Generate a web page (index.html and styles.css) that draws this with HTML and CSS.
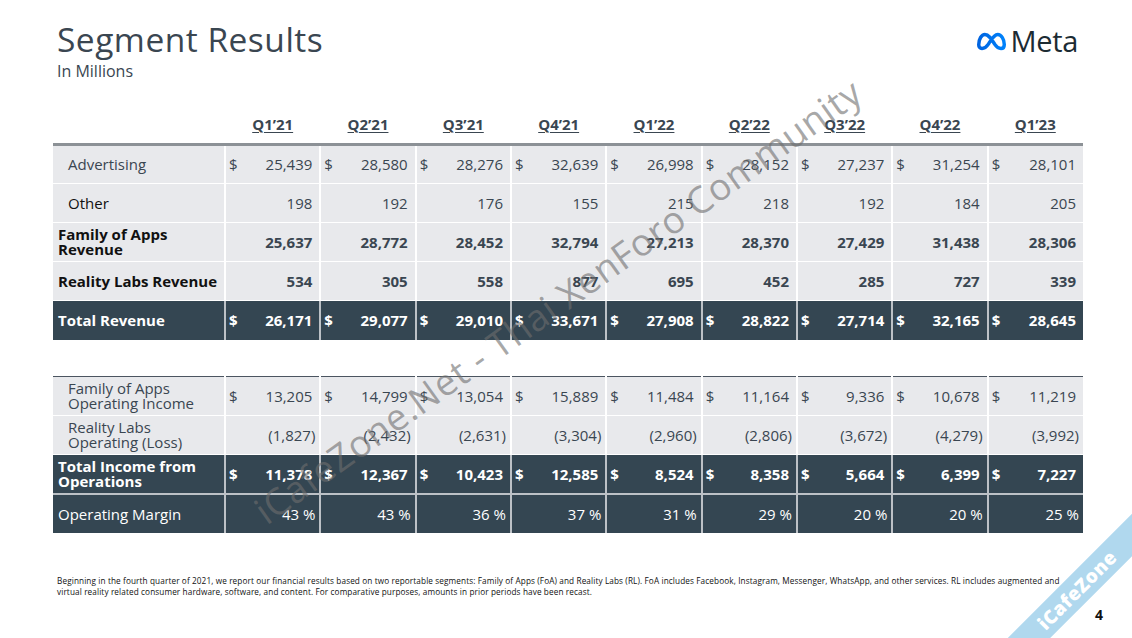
FILE: index.html
```html
<!DOCTYPE html>
<html>
<head>
<meta charset="utf-8">
<link rel="stylesheet" href="styles.css">
</head>
<body>
<div class="slide">
  <header class="top">
    <div class="titles">
      <h1 class="title">Segment Results</h1>
      <div class="subtitle">In Millions</div>
    </div>
    <div class="logo">
      <svg class="logo-mark" viewBox="0 0 40 24" width="33" height="21">
        <defs>
          <linearGradient id="mg" x1="0" y1="0" x2="1" y2="0">
            <stop offset="0" stop-color="#0064e0"/>
            <stop offset="1" stop-color="#0082fb"/>
          </linearGradient>
        </defs>
        <path d="M4.5 16 C4.5 9 8 3.5 12 3.5 C17 3.5 20.5 10 24 15.5 C27 20 29 20.5 31.5 20.5 C34 20.5 35.5 18.5 35.5 15.5 C35.5 9.5 32 3.5 27.5 3.5 C23 3.5 19.5 10 16 15.5 C13 20 11 20.5 8.5 20.5 C6 20.5 4.5 18.5 4.5 16 Z" fill="none" stroke="url(#mg)" stroke-width="4.2" stroke-linejoin="round"/>
      </svg>
      <span class="logo-text">Meta</span>
    </div>
  </header>

  <table class="seg seg-rev">
    <colgroup>
      <col class="c-label"><col><col><col><col><col><col><col><col><col>
    </colgroup>
    <thead>
      <tr class="hdr">
        <th></th>
        <th><span>Q1’21</span></th><th><span>Q2’21</span></th><th><span>Q3’21</span></th>
        <th><span>Q4’21</span></th><th><span>Q1’22</span></th><th><span>Q2’22</span></th>
        <th><span>Q3’22</span></th><th><span>Q4’22</span></th><th><span>Q1’23</span></th>
      </tr>
    </thead>
    <tbody>
      <tr class="light first">
        <td class="lbl ind">Advertising</td>
        <td><div class="c"><span>$</span><span>25,439</span></div></td>
        <td><div class="c"><span>$</span><span>28,580</span></div></td>
        <td><div class="c"><span>$</span><span>28,276</span></div></td>
        <td><div class="c"><span>$</span><span>32,639</span></div></td>
        <td><div class="c"><span>$</span><span>26,998</span></div></td>
        <td><div class="c"><span>$</span><span>28,152</span></div></td>
        <td><div class="c"><span>$</span><span>27,237</span></div></td>
        <td><div class="c"><span>$</span><span>31,254</span></div></td>
        <td><div class="c"><span>$</span><span>28,101</span></div></td>
      </tr>
      <tr class="light">
        <td class="lbl ind dark-text">Other</td>
        <td><div class="c r">198</div></td><td><div class="c r">192</div></td><td><div class="c r">176</div></td>
        <td><div class="c r">155</div></td><td><div class="c r">215</div></td><td><div class="c r">218</div></td>
        <td><div class="c r">192</div></td><td><div class="c r">184</div></td><td><div class="c r">205</div></td>
      </tr>
      <tr class="light bold">
        <td class="lbl two">Family of Apps<br>Revenue</td>
        <td><div class="c r">25,637</div></td><td><div class="c r">28,772</div></td><td><div class="c r">28,452</div></td>
        <td><div class="c r">32,794</div></td><td><div class="c r">27,213</div></td><td><div class="c r">28,370</div></td>
        <td><div class="c r">27,429</div></td><td><div class="c r">31,438</div></td><td><div class="c r">28,306</div></td>
      </tr>
      <tr class="light bold">
        <td class="lbl">Reality Labs Revenue</td>
        <td><div class="c r">534</div></td><td><div class="c r">305</div></td><td><div class="c r">558</div></td>
        <td><div class="c r">877</div></td><td><div class="c r">695</div></td><td><div class="c r">452</div></td>
        <td><div class="c r">285</div></td><td><div class="c r">727</div></td><td><div class="c r">339</div></td>
      </tr>
      <tr class="dark bold">
        <td class="lbl">Total Revenue</td>
        <td><div class="c"><span>$</span><span>26,171</span></div></td>
        <td><div class="c"><span>$</span><span>29,077</span></div></td>
        <td><div class="c"><span>$</span><span>29,010</span></div></td>
        <td><div class="c"><span>$</span><span>33,671</span></div></td>
        <td><div class="c"><span>$</span><span>27,908</span></div></td>
        <td><div class="c"><span>$</span><span>28,822</span></div></td>
        <td><div class="c"><span>$</span><span>27,714</span></div></td>
        <td><div class="c"><span>$</span><span>32,165</span></div></td>
        <td><div class="c"><span>$</span><span>28,645</span></div></td>
      </tr>
    </tbody>
  </table>

  <table class="seg seg-op">
    <colgroup>
      <col class="c-label"><col><col><col><col><col><col><col><col><col>
    </colgroup>
    <tbody>
      <tr class="light first">
        <td class="lbl ind two">Family of Apps<br>Operating Income</td>
        <td><div class="c"><span>$</span><span>13,205</span></div></td>
        <td><div class="c"><span>$</span><span>14,799</span></div></td>
        <td><div class="c"><span>$</span><span>13,054</span></div></td>
        <td><div class="c"><span>$</span><span>15,889</span></div></td>
        <td><div class="c"><span>$</span><span>11,484</span></div></td>
        <td><div class="c"><span>$</span><span>11,164</span></div></td>
        <td><div class="c"><span>$</span><span>9,336</span></div></td>
        <td><div class="c"><span>$</span><span>10,678</span></div></td>
        <td><div class="c"><span>$</span><span>11,219</span></div></td>
      </tr>
      <tr class="light">
        <td class="lbl ind two">Reality Labs<br>Operating (Loss)</td>
        <td><div class="c r p">(1,827)</div></td><td><div class="c r p">(2,432)</div></td><td><div class="c r p">(2,631)</div></td>
        <td><div class="c r p">(3,304)</div></td><td><div class="c r p">(2,960)</div></td><td><div class="c r p">(2,806)</div></td>
        <td><div class="c r p">(3,672)</div></td><td><div class="c r p">(4,279)</div></td><td><div class="c r p">(3,992)</div></td>
      </tr>
      <tr class="dark bold">
        <td class="lbl two">Total Income from<br>Operations</td>
        <td><div class="c"><span>$</span><span>11,378</span></div></td>
        <td><div class="c"><span>$</span><span>12,367</span></div></td>
        <td><div class="c"><span>$</span><span>10,423</span></div></td>
        <td><div class="c"><span>$</span><span>12,585</span></div></td>
        <td><div class="c"><span>$</span><span>8,524</span></div></td>
        <td><div class="c"><span>$</span><span>8,358</span></div></td>
        <td><div class="c"><span>$</span><span>5,664</span></div></td>
        <td><div class="c"><span>$</span><span>6,399</span></div></td>
        <td><div class="c"><span>$</span><span>7,227</span></div></td>
      </tr>
      <tr class="dark margin">
        <td class="lbl">Operating Margin</td>
        <td><div class="c r p">43 %</div></td><td><div class="c r p">43 %</div></td><td><div class="c r p">36 %</div></td>
        <td><div class="c r p">37 %</div></td><td><div class="c r p">31 %</div></td><td><div class="c r p">29 %</div></td>
        <td><div class="c r p">20 %</div></td><td><div class="c r p">20 %</div></td><td><div class="c r p">25 %</div></td>
      </tr>
    </tbody>
  </table>

  <footer class="foot">
    <p class="note">Beginning in the fourth quarter of 2021, we report our financial results based on two reportable segments: Family of Apps (FoA) and Reality Labs (RL). FoA includes Facebook, Instagram, Messenger, WhatsApp, and other services. RL includes augmented and virtual reality related consumer hardware, software, and content. For comparative purposes, amounts in prior periods have been recast.</p>
    <div class="page">4</div>
  </footer>

  <div class="watermark">iCafeZone.Net - Thai XenForo Community</div>
  <div class="ribbon"><span>iCafeZone</span></div>
</div>
</body>
</html>
```

FILE: styles.css
```css
* { box-sizing: border-box; }

html, body {
  margin: 0;
  padding: 0;
  background: #ffffff;
}

body {
  font-family: "Open Sans", "Liberation Sans", sans-serif;
  color: #34404a;
  width: 1132px;
  height: 638px;
  overflow: hidden;
}

.slide {
  position: relative;
  width: 1132px;
  height: 638px;
  padding: 0 0 0 53px;
  overflow: hidden;
}

.top {
  display: flex;
  justify-content: space-between;
  align-items: flex-start;
  padding: 20px 55px 0 4px;
  height: 100px;
}

.title {
  margin: 0;
  font-size: 33.5px;
  font-weight: 400;
  line-height: 38px;
  color: #3a4651;
  letter-spacing: 0.5px;
}

.subtitle {
  margin-top: 3px;
  font-size: 16px;
  line-height: 20px;
  color: #3a4651;
}

.logo {
  display: flex;
  align-items: center;
  gap: 2px;
  margin-top: 5px;
  margin-right: -1px;
}

.logo-mark { display: block; }

.logo-text {
  font-size: 29px;
  font-weight: 500;
  line-height: 32px;
  color: #1c2b33;
  letter-spacing: -0.3px;
}

/* Tables */
.seg {
  width: 1030px;
  border-collapse: collapse;
  table-layout: fixed;
  font-size: 15px;
}

.c-label { width: 172px; }

.seg td, .seg th {
  padding: 0;
}

.hdr th {
  height: 44px;
  font-weight: 700;
  font-size: 15px;
  color: #3a4651;
  text-align: center;
  vertical-align: middle;
  padding-top: 5px;
}

.hdr th span {
  text-decoration: underline;
  text-underline-offset: 2px;
  text-decoration-thickness: 1px;
}

.seg tr.first td {
  border-top: 3px solid #8c9196;
}

.seg-op tr.first td {
  border-top: 1px solid #4b5560;
}

.seg td {
  height: 39px;
  vertical-align: middle;
  border-left: 2px solid #ffffff;
  border-bottom: 1px solid #ffffff;
}

.seg td:first-child { border-left: none; }

.light td {
  background: #e8e9ec;
  color: #3a4651;
}

.dark td {
  background: #344652;
  color: #ffffff;
  border-left: 2px solid #bcc1c6;
  border-bottom: 2px solid #bcc1c6;
}

.dark td:first-child { border-left: none; }

.seg-rev .dark td { border-top: 1px solid #1f2a32; border-bottom: none; height: 40px; }

.seg-op .dark.margin td { border-bottom: none; }

.bold td { font-weight: 700; }

.lbl {
  padding-left: 5px !important;
  font-size: 15px;
  color: #111111;
}

.light .lbl { color: #111111; }
.light .lbl.ind { padding-left: 15px !important; color: #3a4651; }
.light .lbl.dark-text { color: #111111; }
.dark .lbl { color: #ffffff; }

.lbl.two { line-height: 15px; }

.c {
  display: flex;
  justify-content: space-between;
  align-items: center;
  padding: 0 7px 0 3px;
  white-space: nowrap;
}

.c.r { justify-content: flex-end; }
.c.p { padding-right: 4px; }

.seg-op {
  margin-top: 36px;
}

/* Footer */
.foot {
  position: relative;
  margin-top: 42px;
  padding-left: 4px;
  width: 1032px;
}

.note {
  margin: 0;
  font-family: "Open Sans", "Liberation Sans", sans-serif;
  font-size: 8.2px;
  letter-spacing: 0.12px;
  line-height: 11px;
  color: #111111;
}

.page {
  position: absolute;
  right: -18px;
  top: 30px;
  font-size: 14px;
  font-weight: 700;
  color: #111111;
}

/* Watermark overlays */
.watermark {
  position: absolute;
  left: 244px;
  top: 494px;
  transform-origin: 0 0;
  transform: rotate(-35.5deg);
  font-family: "Open Sans", "Liberation Sans", sans-serif;
  font-size: 37px;
  line-height: 50px;
  letter-spacing: 0.6px;
  color: rgba(110, 110, 110, 0.6);
  white-space: nowrap;
  pointer-events: none;
}

.ribbon {
  position: absolute;
  right: -60px;
  bottom: 33px;
  width: 230px;
  height: 30px;
  background: #b0d8ee;
  transform: rotate(-45deg);
  display: flex;
  justify-content: center;
  align-items: center;
}

.ribbon span {
  font-family: "Open Sans", "Liberation Sans", sans-serif;
  font-weight: 800;
  font-size: 19px;
  color: #ffffff;
  letter-spacing: 0.5px;
}
```
